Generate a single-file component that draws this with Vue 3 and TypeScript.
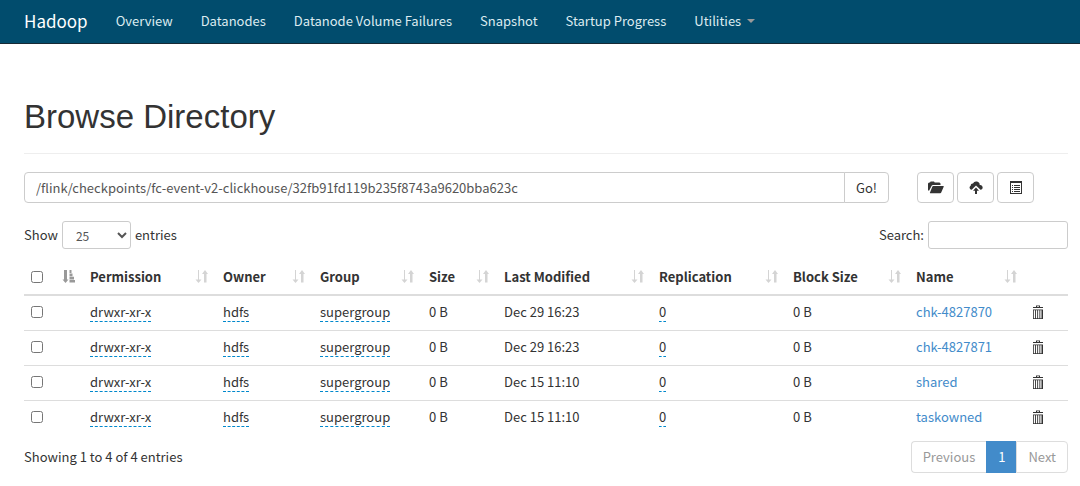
<script setup lang="ts">
import { ref } from 'vue'

interface Entry {
  permission: string
  owner: string
  group: string
  size: string
  modified: string
  replication: number
  blockSize: string
  name: string
}

const navItems: string[] = ['Overview', 'Datanodes', 'Datanode Volume Failures', 'Snapshot', 'Startup Progress']
const columns: string[] = ['Permission', 'Owner', 'Group', 'Size', 'Last Modified', 'Replication', 'Block Size', 'Name']

const path = ref('/flink/checkpoints/fc-event-v2-clickhouse/32fb91fd119b235f8743a9620bba623c')
const pageLength = ref('25')
const search = ref('')

function entry(modified: string, name: string): Entry {
  return { permission: 'drwxr-xr-x', owner: 'hdfs', group: 'supergroup', size: '0 B', modified, replication: 0, blockSize: '0 B', name }
}

const entries: Entry[] = [
  entry('Dec 29 16:23', 'chk-4827870'),
  entry('Dec 29 16:23', 'chk-4827871'),
  entry('Dec 15 11:10', 'shared'),
  entry('Dec 15 11:10', 'taskowned'),
]
</script>

<template>
  <div class="page">
    <header class="navbar">
      <a class="brand" href="#">Hadoop</a>
      <nav class="nav">
        <a v-for="item in navItems" :key="item" href="#">{{ item }}</a>
        <a href="#">Utilities<span class="caret"></span></a>
      </nav>
    </header>

    <main class="content">
      <h1>Browse Directory</h1>

      <div class="toolbar">
        <form class="path-form" @submit.prevent>
          <input v-model="path" class="path" type="text" aria-label="Directory path" />
          <button class="go" type="submit">Go!</button>
        </form>
        <div class="actions">
          <button type="button" aria-label="Create directory">
            <svg width="16" height="14" viewBox="0 0 16 14">
              <path d="M0 9.500V2.500L1 1.500H2L2.600 .6H6L6.700 1.500H11.500L12.500 2.500V4H4.800L3.800 4.600L1.200 9.500Z" />
              <path d="M5.200 5H15.300Q16 5 15.700 5.700L13.200 11.600Q12.900 12.300 12.200 12.300H2.300Q1.600 12.300 2 11.500L4.400 5.500Q4.600 5 5.200 5Z" />
            </svg>
          </button>
          <button type="button" aria-label="Upload files">
            <svg width="14" height="14" viewBox="0 0 14 14">
              <path d="M2.500 8.800A2.200 2.200 0 0 1 1.700 4.700A2 2 0 0 1 4 2.500A3.500 3.500 0 0 1 10.700 4A2.500 2.500 0 0 1 12 8.800H11.500L7 4.600L2.700 8.800Z" />
              <path d="M7 6.400L10 9.700H8V13H6V9.700H4Z" />
            </svg>
          </button>
          <button type="button" aria-label="Cut and paste">
            <svg width="14" height="14" viewBox="0 0 14 14">
              <path fill-rule="evenodd" d="M1 0H13V13H1ZM2 2V12H12V2Z" />
              <path d="M3 4H4V5H3ZM5 4H11V5H5ZM3 6H4V7H3ZM5 6H11V7H5ZM3 8H4V9H3ZM5 8H11V9H5ZM3 10H4V11H3ZM5 10H11V11H5Z" />
            </svg>
          </button>
        </div>
      </div>

      <div class="controls">
        <label>Show
          <select v-model="pageLength">
            <option>25</option>
            <option>50</option>
            <option>100</option>
          </select>
          entries</label>
        <label>Search: <input v-model="search" class="search" type="search" /></label>
      </div>

      <table>
        <colgroup>
          <col class="c-check" /><col class="c-perm" /><col class="c-owner" /><col class="c-group" /><col class="c-size" />
          <col class="c-mod" /><col class="c-repl" /><col class="c-block" /><col class="c-name" /><col class="c-trash" />
        </colgroup>
        <thead>
          <tr>
            <th>
              <div class="head">
                <input type="checkbox" aria-label="Select all" />
                <svg class="sort active" width="14" height="14" viewBox="0 0 14 14">
                  <path d="M2 0H5V9.500H6.500L3.500 13L.5 9.500H2ZM7.500 0H9.500V3H7.500ZM7.500 3.500H10.500V6.300H7.500ZM7.500 6.800H12V9.500H7.500ZM7.500 10H13V12.500H7.500Z" />
                </svg>
              </div>
            </th>
            <th v-for="column in columns" :key="column" scope="col">
              <div class="head">
                <span>{{ column }}</span>
                <svg class="sort" width="14" height="14" viewBox="0 0 14 14">
                  <path d="M3 0H4V9.500H6.500L3.500 13L.5 9.500H3ZM9 12.500V4H7L10 0L13 4H11.500V12.500Z" />
                </svg>
              </div>
            </th>
            <th></th>
          </tr>
        </thead>
        <tbody>
          <tr v-for="row in entries" :key="row.name">
            <td><input type="checkbox" :aria-label="'Select ' + row.name" /></td>
            <td><span class="editable">{{ row.permission }}</span></td>
            <td><span class="editable">{{ row.owner }}</span></td>
            <td><span class="editable">{{ row.group }}</span></td>
            <td>{{ row.size }}</td>
            <td>{{ row.modified }}</td>
            <td><span class="editable">{{ row.replication }}</span></td>
            <td>{{ row.blockSize }}</td>
            <td><a href="#">{{ row.name }}</a></td>
            <td>
              <button class="trash" type="button" :aria-label="'Delete ' + row.name">
                <svg width="12" height="15" viewBox="0 0 12 15">
                  <path fill-rule="evenodd" d="M4 2V.5H8V2H11V3H1V2ZM5 2H7V1.300H5ZM1 4.500H11V14H1ZM1.800 5.300V13.200H3V5.300ZM3.900 5.300V13.200H5.200V5.300ZM6.100 5.300V13.200H7.400V5.300ZM8.300 5.300V13.200H9.500V5.300Z" />
                </svg>
              </button>
            </td>
          </tr>
        </tbody>
      </table>

      <footer class="footer">
        <span>Showing 1 to 4 of 4 entries</span>
        <nav class="pagination" aria-label="Pages">
          <button type="button">Previous</button>
          <button class="current" type="button">1</button>
          <button type="button">Next</button>
        </nav>
      </footer>
    </main>
  </div>
</template>

<style>
body {
  background: #fff;
}
</style>

<style scoped>
.page,
.page * {
  box-sizing: border-box;
}

.page {
  font: 400 13px/18px "Noto Sans CJK SC", "Noto Sans", sans-serif;
  color: #333;
}

button,
input,
select {
  font: inherit;
  color: inherit;
}

a {
  color: #428bca;
  text-decoration: none;
}

svg {
  display: block;
  fill: currentColor;
}

.navbar {
  display: flex;
  align-items: center;
  height: 44px;
  padding: 0 24px 2px;
  background: #014c6d;
  border-bottom: 1px solid #172a35;
}

.brand {
  margin-right: 28px;
  color: #fff;
  font-size: 17px;
}

.nav {
  display: flex;
  gap: 28px;
}

.nav a {
  display: flex;
  align-items: center;
  color: #dcebf0;
}

.caret {
  margin-left: 6px;
  border: 4px solid transparent;
  border-top-color: #999;
  border-bottom: 0;
}

.content {
  padding: 53px 12px 14px 24px;
}

h1 {
  margin: 0 0 18px;
  padding-bottom: 17px;
  border-bottom: 1px solid #eee;
  font: 400 33px/39px "Liberation Sans", sans-serif;
}

.toolbar {
  display: flex;
  gap: 28px;
  padding-right: 34px;
}

.path-form {
  display: flex;
  flex: 1;
}

.path {
  flex: 1;
  min-width: 0;
  height: 31px;
  padding: 0 11px;
  border: 1px solid #ccc;
  border-radius: 4px 0 0 4px;
  color: #555;
}

.go {
  width: 45px;
  margin-left: -1px;
  padding: 0;
  border: 1px solid #ccc;
  border-radius: 0 4px 4px 0;
  background: #fff;
}

.actions {
  display: flex;
  gap: 3px;
}

.actions button {
  display: grid;
  place-items: center;
  width: 37px;
  padding: 0;
  border: 1px solid #ccc;
  border-radius: 4px;
  background: #fff;
}

.controls {
  display: flex;
  justify-content: space-between;
  margin-top: 18px;
}

.controls label {
  display: flex;
  align-items: center;
  gap: 4px;
}

select,
.search {
  height: 28px;
  border: 1px solid #ccc;
  border-radius: 3px;
  background: #fff;
}

select {
  width: 69px;
  padding: 0 0 0 9px;
  font-size: 12px;
  color: #555;
}

.search {
  width: 140px;
  padding: 0 9px;
}

table {
  width: 100%;
  margin-top: 10px;
  table-layout: fixed;
  border-collapse: collapse;
}

.c-check { width: 58px; }
.c-perm { width: 133px; }
.c-owner { width: 97px; }
.c-group { width: 109px; }
.c-size { width: 75px; }
.c-mod { width: 155px; }
.c-repl { width: 134px; }
.c-block { width: 123px; }
.c-name { width: 116px; }
.c-trash { width: 44px; }

th,
td {
  height: 35px;
  padding: 0 8px 1px;
  text-align: left;
  vertical-align: middle;
  white-space: nowrap;
}

th {
  height: 36px;
  padding: 0 6px 0 8px;
  border-bottom: 2px solid #ddd;
  font-weight: 700;
}

tbody tr + tr td {
  border-top: 1px solid #ddd;
}

.head {
  display: flex;
  align-items: center;
  justify-content: space-between;
}

.sort {
  color: #d4d4d4;
}

.sort.active {
  color: #999;
}

input[type="checkbox"] {
  display: block;
  width: 12px;
  height: 12px;
  margin: 0 0 0 -1px;
}

.editable {
  border-bottom: 1px dashed #0088cc;
}

.trash {
  display: block;
  padding: 0;
  border: 0;
  background: none;
}

.footer {
  display: flex;
  align-items: center;
  justify-content: space-between;
  margin-top: 6px;
}

.pagination {
  display: flex;
}

.pagination button {
  height: 32px;
  padding: 0 11px;
  border: 1px solid #ddd;
  border-right: 0;
  background: #fff;
  color: #999;
}

.pagination button:first-child {
  border-radius: 4px 0 0 4px;
}

.pagination button:last-child {
  border-right: 1px solid #ddd;
  border-radius: 0 4px 4px 0;
}

.pagination .current {
  border-color: #428bca;
  background: #428bca;
  color: #fff;
}
</style>
